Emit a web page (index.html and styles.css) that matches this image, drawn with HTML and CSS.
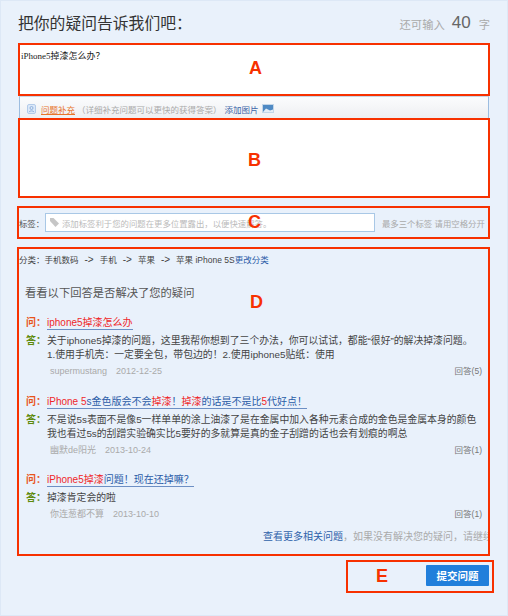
FILE: index.html
```html
<!DOCTYPE html>
<html lang="zh">
<head>
<meta charset="utf-8">
<title>提问</title>
<link rel="stylesheet" href="styles.css">
</head>
<body>
<main class="page">
  <header class="head">
    <h1 class="title">把你的疑问告诉我们吧：</h1>
    <div class="count"><span>还可输入</span><b>40</b><span>字</span></div>
  </header>
  <section class="box box-a">
    <p class="question">iPhone5掉漆怎么办？</p>
    <span class="mark mark-a">A</span>
  </section>
  <div class="toolbar">
    <svg class="tool-icon" width="9" height="10" viewBox="0 0 9 10"><rect x=".5" y=".5" width="8" height="9" rx="1.500" fill="#dbe8f8" stroke="#b3cbe9"/><circle cx="4.500" cy="4" r="1.500" fill="none" stroke="#7fa5d6" stroke-width=".8"/><path d="M2 8c.5-1.500 4.500-1.500 5 0" fill="none" stroke="#7fa5d6" stroke-width=".8"/></svg>
    <a class="supp">问题补充</a>
    <span class="hint">（详细补充问题可以更快的获得答案）</span>
    <a class="add">添加图片</a>
    <svg class="pic-icon" width="12" height="9" viewBox="0 0 12 9"><rect width="12" height="9" fill="#c3d6e8"/><rect x="1" y="1" width="10" height="7" fill="#4f8ac4"/><path d="M1 8l3-3.500 4 2 3-1V8z" fill="#e4edf6"/></svg>
  </div>
  <section class="box box-b"><span class="mark mark-b">B</span></section>
  <section class="box box-c">
    <span class="tag-label">标签：</span>
    <div class="tag-input">
      <svg class="tag-icon" width="9" height="9" viewBox="0 0 9 9"><path d="M0 3V0h3.500L9 5.500 5.500 9z" fill="#c6c6c6"/></svg>
      <span class="tag-hint">添加标签利于您的问题在更多位置露出，以便快速解答。</span>
    </div>
    <span class="tag-tip">最多三个标签 请用空格分开</span>
    <span class="mark mark-c">C</span>
  </section>
  <section class="box box-d">
    <div class="crumb">分类：手机数码<span class="arrow">-&gt;</span>手机<span class="arrow">-&gt;</span>苹果<span class="arrow">-&gt;</span>苹果 iPhone 5S<a>更改分类</a></div>
    <h2 class="sub">看看以下回答是否解决了您的疑问</h2>
    <span class="mark mark-d">D</span>
    <article class="qa">
      <div class="row"><span class="q">问：</span><a class="qlink"><em>iphone5掉漆怎么办</em></a></div>
      <div class="row ans"><span class="a">答：</span><p>关于iphone5掉漆的问题，这里我帮你想到了三个办法，你可以试试，都能“很好”的解决掉漆问题。<br>1.使用手机壳：一定要全包，带包边的！2.使用iphone5贴纸：使用</p></div>
      <div class="meta"><span class="who">supermustang</span><span>2012-12-25</span><span class="replies">回答(5)</span></div>
    </article>
    <article class="qa">
      <div class="row"><span class="q">问：</span><a class="qlink"><em>iPhone 5</em>s金色版会不会<em>掉漆</em>！<em>掉漆</em>的话是不是比<em>5</em>代好点！</a></div>
      <div class="row ans"><span class="a">答：</span><p>不是说5s表面不是像5一样单单的涂上油漆了是在金属中加入各种元素合成的金色是金属本身的颜色<br>我也看过5s的刮蹭实验确实比5要好的多就算是真的金子刮蹭的话也会有划痕的啊总</p></div>
      <div class="meta"><span class="who">幽默de阳光</span><span>2013-10-24</span><span class="replies">回答(1)</span></div>
    </article>
    <article class="qa">
      <div class="row"><span class="q">问：</span><a class="qlink"><em>iPhone5掉漆</em>问题！现在还掉嘛？</a></div>
      <div class="row ans"><span class="a">答：</span><p>掉漆肯定会的啦</p></div>
      <div class="meta"><span class="who">你连葱都不算</span><span>2013-10-10</span><span class="replies">回答(1)</span></div>
    </article>
    <div class="more"><a>查看更多相关问题</a>，如果没有解决您的疑问，请继续</div>
  </section>
  <div class="foot">
    <section class="box box-e">
      <span class="mark mark-e">E</span>
      <button class="submit" type="button">提交问题</button>
    </section>
  </div>
</main>
</body>
</html>
```
FILE: styles.css
```css
* { box-sizing: border-box; }
html, body { margin: 0; }
body { width: 508px; height: 616px; overflow: hidden; font-family: "Liberation Sans", "Noto Sans CJK SC", sans-serif; }
.page { width: 508px; height: 616px; padding: 0 17px 0 16px; background: #e9f1fb; border: 1px solid #dde8f6; }
.head { height: 42px; display: flex; justify-content: space-between; align-items: center; padding: 1px 0 0 1px; }
.title { margin: 0; font-size: 15.800px; font-weight: 400; color: #333; }
.count { display: flex; align-items: center; color: #aaa; font-size: 11.300px; padding-top: 3px; }
.count b { font-weight: 400; font-size: 17px; color: #666; margin: -3px 8px 0 7px; }
.box { position: relative; border: 2px solid #f73100; }
.mark { position: absolute; color: #f73100; font-size: 18px; font-weight: 700; line-height: 20px; }
.box-a { height: 53px; margin-left: 1px; background: #fff; padding: 4px 1px; }
.question { margin: 0; font-family: "Liberation Serif", "Noto Sans CJK SC", serif; font-size: 9px; line-height: 14px; color: #222; }
.mark-a { left: 229px; top: 13px; }
.toolbar { height: 22px; margin: 0 1px 0 2px; display: flex; align-items: center; font-size: 8.500px; padding: 2px 0 0 7px; background: linear-gradient(#fbfcfd, #eeeff2); border-left: 1px solid #9dbde0; border-right: 1px solid #9dbde0; border-top: 1px solid #c9d6e6; color: #aaa; }
.tool-icon { margin-right: 5px; }
.supp { color: #e8742a; text-decoration: underline; margin-right: 2px; }
.add { color: #3c65a8; margin: 0 3px 0 3px; }
.box-b { height: 80px; margin-left: 1px; background: #fff; }
.mark-b { left: 228px; top: 30px; }
.box-c { height: 33px; margin-top: 8px; display: flex; align-items: center; padding-left: 0; font-size: 8.400px; }
.tag-label { color: #555; width: 26px; white-space: nowrap; }
.tag-input { width: 330px; height: 19px; background: #fff; border: 1px solid #a9c8e6; display: flex; align-items: center; padding-left: 4px; color: #bbb; gap: 3px; }
.tag-tip { color: #aaa; margin-left: 7px; white-space: nowrap; }
.mark-c { left: 229px; top: 4px; }
.box-d { height: 309px; margin-top: 8px; padding: 2px 0 0; font-size: 8.500px; overflow: hidden; }
.crumb { color: #444; line-height: 14px; margin-top: 2px; }
.crumb a { color: #2b5ca8; }
.arrow { margin: 0 6px; font-size: 10px; }
.sub { margin: 18px 0 15px 6px; font-size: 11.300px; font-weight: 400; line-height: 16px; color: #555; }
.mark-d { left: 231px; top: 43px; }
.qa { padding-left: 7px; color: #444; font-size: 10px; }
.qa + .qa { margin-top: 16.500px; }
.row { display: flex; line-height: 14px; }
.row p { margin: 0; font-size: 9.850px; line-height: 14px; white-space: nowrap; }
.ans { margin-top: 4px; }
.q, .a { width: 21px; font-weight: 700; font-size: 10px; flex: none; }
.q { color: #e8541a; }
.a { color: #5e8a0c; }
.qlink { color: #2b5ca8; border-bottom: 1px solid #6d8fc4; font-size: 10px; line-height: 13px; }
.qlink em { font-style: normal; color: #f0282a; }
.meta { display: flex; gap: 9px; color: #aaa; font-size: 9px; line-height: 14px; margin-top: 2px; padding: 0 6px 0 24px; }
.replies { margin-left: auto; color: #777; font-size: 8.500px; }
.more { margin-top: 9px; white-space: nowrap; padding-left: 244px; color: #aaa; font-size: 10px; line-height: 14px; }
.more a { color: #2f62aa; }
.foot { display: flex; justify-content: flex-end; margin: 4px -4px 0 0; }
.box-e { width: 148px; height: 33px; padding: 3px 3px 0 0; display: flex; justify-content: flex-end; align-items: flex-start; }
.mark-e { left: 28px; top: 4px; }
.submit { width: 63px; height: 21px; border: 0; border-radius: 1px; background: #217fdb; color: #fff; font-family: inherit; font-size: 10.500px; font-weight: 700; padding: 0; }
```
